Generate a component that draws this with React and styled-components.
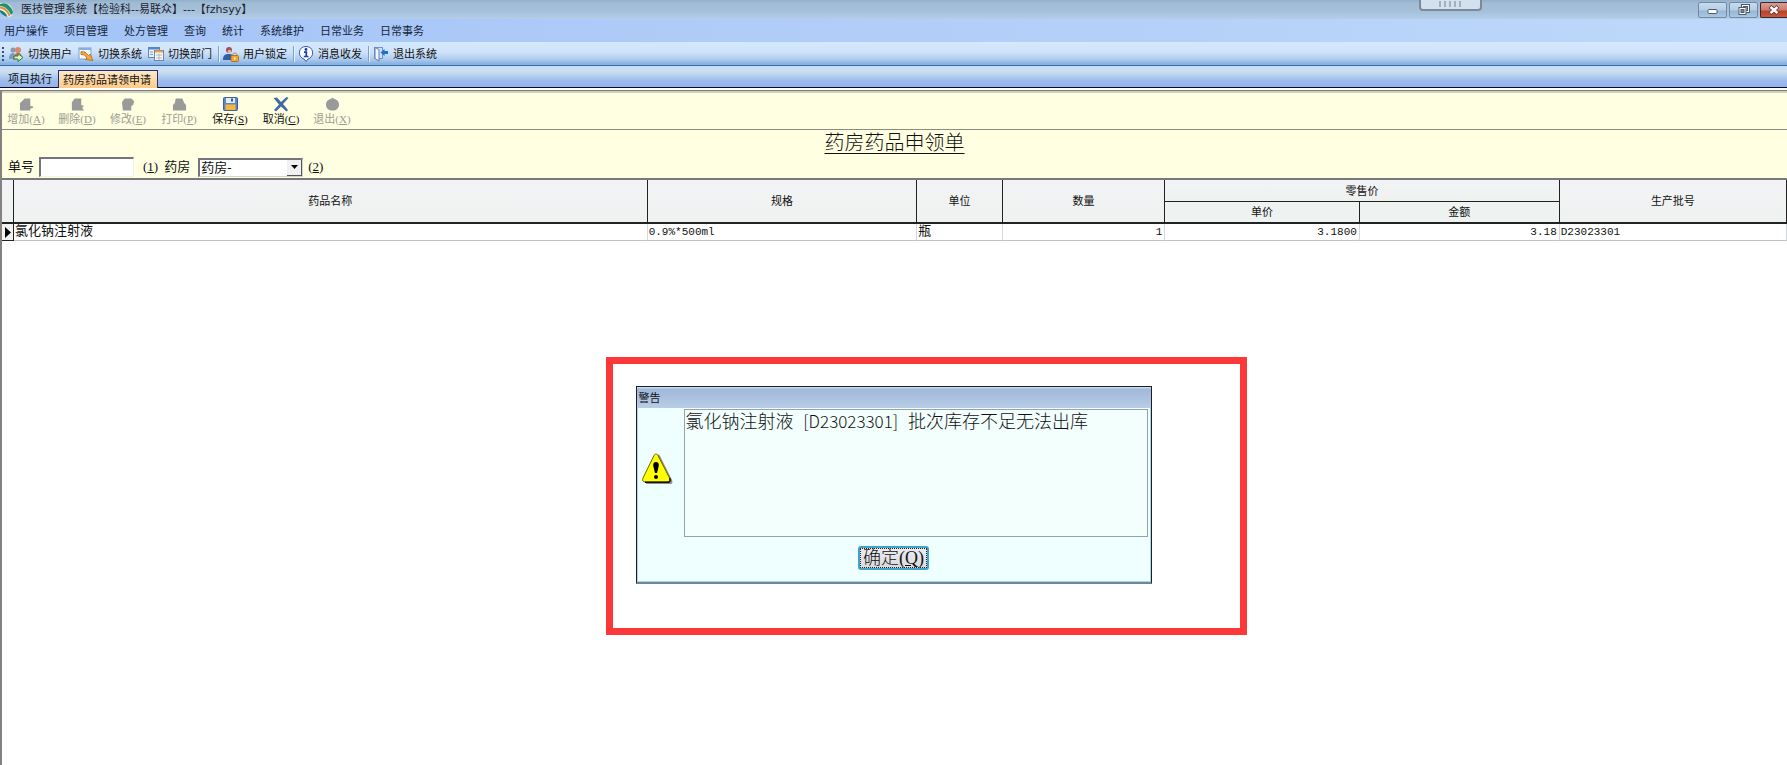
import React, { useState } from 'react'
import styled, { createGlobalStyle } from 'styled-components'

const GlobalStyle = createGlobalStyle`
    * {
        box-sizing: border-box;
    }
    body {
        margin: 0;
        background: #fff;
        color: #111;
        font-family: "Liberation Serif", "Noto Sans CJK SC", serif;
        font-size: 11px;
        line-height: 16px;
        overflow: hidden;
    }
    button, input, select {
        font: inherit;
        color: inherit;
        margin: 0;
        padding: 0;
    }
`

const Page = styled.div`
    min-height: 100vh;
    display: flex;
    flex-direction: column;
`

const TitleBar = styled.header`
    position: relative;
    height: 19px;
    display: flex;
    align-items: center;
    gap: 7px;
    background: linear-gradient(#8fb0cc 0, #a3bcd6 3px, #a6c0da 11px, #b4cdea 100%);
    overflow: hidden;
`

const TitleText = styled.h1`
    flex: 1;
    margin: 0;
    font: 400 11px/16px "DejaVu Sans", "Noto Sans CJK SC", sans-serif;
    color: #1a2430;
`

const WindowButtons = styled.div`
    display: flex;
    gap: 2px;
`

const WindowButton = styled.button`
    width: ${props => props.$close ? 27 : 29}px;
    height: 16px;
    display: flex;
    align-items: center;
    justify-content: center;
    border: 1px solid ${props => props.$close ? '#3c2530' : '#6d8aa6'};
    border-right-width: ${props => props.$close ? 0 : 1}px;
    border-radius: ${props => props.$close ? '2px 0 0 2px' : '2px'};
    background: ${props => props.$close
        ? 'linear-gradient(#d9a095 0, #cb7a69 7px, #b9422a 8px, #c8583c 100%)'
        : 'linear-gradient(#c9dcee 0, #b5cde4 7px, #98b6d2 8px, #a9c8e2 100%)'};
`

const PullTab = styled.div`
    position: absolute;
    top: -4px;
    left: 79.4%;
    width: 63px;
    height: 15px;
    display: flex;
    justify-content: center;
    align-items: center;
    gap: 3px;
    border: 2px solid #7c8a98;
    border-radius: 4px;
    background: #d3e0ee;
    span {
        width: 2px;
        height: 6px;
        background: #a3afbd;
    }
`

const MenuBar = styled.nav`
    height: 23px;
    padding-left: 4px;
    display: flex;
    align-items: center;
    gap: 16px;
    background: linear-gradient(90deg, #a4c4f7, #b2cdf8 50%, #bed9fa);
`

const MenuItem = styled.a`
    color: #15263c;
    text-decoration: none;
`

const ToolBar = styled.div`
    height: 24px;
    padding-left: 2px;
    display: flex;
    align-items: center;
    background: linear-gradient(#d3e9fd 0, #cfe2fa 10px, #b0cdee 17px, #86b1e2 22px);
    border-bottom: 1px solid #3f6aa8;
`

const Grip = styled.span`
    width: 2px;
    height: 14px;
    margin-right: 4px;
    background: repeating-linear-gradient(#2f4f86 0 2px, transparent 2px 4px);
`

const ToolButton = styled.button`
    display: flex;
    align-items: center;
    gap: 4px;
    margin-right: 6px;
    border: 0;
    background: none;
    white-space: nowrap;
`

const Divider = styled.span`
    width: 1px;
    height: 16px;
    margin-right: 4px;
    background: #7f9fcb;
    box-shadow: 1px 0 #e6f1fd;
`

const TabStrip = styled.div`
    height: 22px;
    padding-left: 8px;
    display: flex;
    align-items: flex-end;
    gap: 6px;
    background: linear-gradient(#c3def9 0, #d0e0f2 5px, #b9d3f1 9px, #9bbbec 15px, #93b2ea 100%);
    box-shadow: inset 0 -1px #0c0c28;
`

const Tab = styled.button`
    height: 18px;
    padding: ${props => props.$active ? '0 6px 0 4px' : '0'};
    border: ${props => props.$active ? '1px solid #1c2c78' : '0'};
    border-bottom: 0;
    background: ${props => props.$active ? 'linear-gradient(#fde8c8, #ffcb86)' : 'none'};
`

const Sheet = styled.main`
    flex: 1;
    display: flex;
    flex-direction: column;
    margin-top: 2px;
    border-top: 1px solid #8f7468;
    border-left: 2px solid #85817f;
    background: #fff;
`

const ActionBar = styled.div`
    height: 39px;
    padding: 4px 0 0 5px;
    display: flex;
    align-items: flex-start;
    gap: 13px;
    background: #ffffe1;
    border-top: 2px solid #c9d3c4;
    border-bottom: 1px solid #8b8b80;
`

const ActionButton = styled.button`
    width: 38px;
    display: flex;
    flex-direction: column;
    align-items: center;
    border: 0;
    background: none;
    white-space: nowrap;
    line-height: 14px;
    color: ${props => props.disabled ? '#9d9d92' : '#111'};
`

const FormHead = styled.section`
    padding: 1px 6px;
    background: #ffffe1;
`

const FormTitle = styled.h2`
    margin: 0 0 2px;
    font-size: 20px;
    font-weight: 300;
    line-height: 24px;
    text-align: center;
    text-decoration: underline;
    text-decoration-thickness: 1px;
    text-underline-offset: 3px;
`

const FormRow = styled.div`
    height: 20px;
    display: flex;
    align-items: center;
    gap: 6px;
    font-size: 13px;
`

const NumberInput = styled.input`
    width: 95px;
    height: 20px;
    margin-right: 4px;
    border: 1px solid #f4f4e4;
    border-top: 2px solid #74747c;
    border-left: 2px solid #74747c;
    border-radius: 0;
    background: #fff;
    outline: none;
`

const Field = styled.label`
    display: flex;
    align-items: center;
    gap: 5px;
`

const SelectBox = styled.span`
    position: relative;
    display: flex;
    margin-left: 3px;
`

const Select = styled.select`
    width: 105px;
    height: 19px;
    padding-left: 1px;
    appearance: none;
    border: 1px solid #d4d4cc;
    border-top: 2px solid #74747c;
    border-left: 2px solid #74747c;
    border-radius: 0;
    background: #fff;
    outline: none;
`

const SelectArrow = styled.span`
    position: absolute;
    top: 2px;
    right: 1px;
    width: 15px;
    height: 16px;
    display: flex;
    align-items: center;
    justify-content: center;
    background: #f1f1f1;
    border-right: 1px solid #55555c;
    border-bottom: 1px solid #55555c;
    pointer-events: none;
`

const Grid = styled.table`
    width: 100%;
    table-layout: fixed;
    border-collapse: separate;
    border-spacing: 0;
    border-top: 2px solid #77797c;
    th, td {
        padding: 0;
        white-space: nowrap;
    }
    thead tr {
        height: 22px;
    }
    tbody tr {
        height: 17px;
    }
`

const HeadCell = styled.th`
    font-weight: 400;
    line-height: 18px;
    border-right: 1px solid #222;
    border-bottom: ${props => props.$group ? 1 : 2}px solid #222;
    background: ${props => props.$low ? '#eef2f0' : 'linear-gradient(#f3f3f6, #eef2ef)'};
`

const Cell = styled.td`
    border-right: 1px solid #d3d8de;
    border-bottom: 1px solid #bfc3c6;
    font-family: "Liberation Mono", "Noto Sans CJK SC", monospace;
    font-size: ${props => props.$text ? 13 : 11}px;
    line-height: 16px;
    text-align: ${props => props.$right ? 'right' : 'left'};
    && {
        padding: 0 2px 0 1px;
    }
`

const MarkerCell = styled.td`
    border-right: 1px solid #222;
    border-bottom: 1px solid #222;
    background: #f2f2f2;
    svg {
        display: block;
        margin-left: 3px;
    }
`

/* floats over the sheet */
const Highlight = styled.div`
    position: absolute;
    top: 357px;
    left: calc(50% - 288px);
    width: 641px;
    height: 278px;
    padding: 22px 23px;
    border: 7px solid #fd3838;
    background: #fff;
`

const Dialog = styled.div`
    width: 516px;
    height: 198px;
    display: flex;
    flex-direction: column;
    border: 1px solid #1a1f26;
    border-bottom: 2px solid #6d8796;
    background: #effefe;
    box-shadow: inset -1px -1px #a9d4ea, inset 1px 0 #a9d4ea;
`

const DialogTitle = styled.div`
    height: 21px;
    padding: 3px 0 0 2px;
    background: linear-gradient(#d9e9f6 0, #a1b9da 2px, #a8bfde 9px, #b9cde6 100%);
`

const DialogBody = styled.div`
    flex: 1;
    display: grid;
    grid-template-columns: 36px 1fr;
    column-gap: 11px;
    padding: 1px 3px 0 0;
`

const DialogIcon = styled.div`
    padding: 44px 0 0 5px;
`

const Message = styled.div`
    height: 128px;
    padding: 0 1px;
    border: 1px solid #98a3a6;
    background: #f2fffd;
    font-size: 18px;
    font-weight: 300;
    line-height: 22px;
    white-space: pre;
`

const Code = styled.span`
    margin: 0 6px;
    font-family: "Noto Sans CJK SC", sans-serif;
    font-size: 17px;
`

const DialogFoot = styled.div`
    height: 46px;
    display: flex;
    justify-content: center;
    align-items: flex-start;
    padding-top: 9px;
`

const OkButton = styled.button`
    width: 71px;
    height: 24px;
    border: 2px solid #3fa4c8;
    border-radius: 3px;
    background: linear-gradient(#ececf0, #d9d9de);
    outline: 1px dotted #222;
    outline-offset: -3px;
    font-size: 18px;
    font-weight: 300;
    line-height: 18px;
    white-space: nowrap;
`

const LogoIcon = () => (
    <svg width="14" height="16" viewBox="0 0 14 16">
        <path d="M0 1 H5 C10 2 13 6 13 10 C13 13 11 15 8 15 C5 14 2 12 0 9Z" fill="#eef2e8" />
        <path d="M0 2 C3 1 5 1 7 2 C11 5 13 8 13 11 L11 13 C9 8 5 4 0 4Z" fill="#23906f" />
        <path d="M0 4.500 C5 5 8 8 10.500 13 L9 14.500 C7 10 4 7 0 6.500Z" fill="#e58f35" />
        <path d="M0 8 C4 9 6 11 7.500 15 C4 14 2 12 0 10Z" fill="#177f86" />
    </svg>
)

const UsersIcon = () => (
    <svg width="16" height="16" viewBox="0 0 16 16">
        <circle cx="5" cy="4" r="2.5" fill="#8b9aa8" />
        <path d="M1 13 C1 8 3 7 6 7 L8 13Z" fill="#6f9fc8" />
        <circle cx="10" cy="4" r="3" fill="#d98a6c" />
        <path d="M5 14 C5 9 7 7 10 7 C13 7 14 9 14 12Z" fill="#d8695e" />
        <path d="M6 10 H10 V7.500 L15 11.500 L10 15.500 V13 H6Z" fill="#d9f3cc" stroke="#2f7d3a" />
    </svg>
)

const SystemIcon = () => (
    <svg width="16" height="16" viewBox="0 0 16 16">
        <rect x="1" y="2" width="12" height="11" fill="#f6f9fd" stroke="#7da2d4" />
        <rect x="1" y="2" width="12" height="2" fill="#88aee0" />
        <path d="M3 5.500 L7 6 L10.500 9.500 L12 8 L15 14.500 L7.500 13.500 L9 12 L6.500 9 L3 8.500Z" fill="#f4a936" stroke="#b5671a" strokeWidth=".8" />
    </svg>
)

const DeptIcon = () => (
    <svg width="16" height="16" viewBox="0 0 16 16">
        <rect x="0.500" y="1.500" width="11" height="10" fill="#e9f1fc" stroke="#5f83c4" />
        <path d="M1 2.500 H11" stroke="#5f83c4" strokeWidth="2" />
        <path d="M2 6 H5 M2 8.500 H5" stroke="#7d9ace" />
        <rect x="6.500" y="4.500" width="9" height="10" fill="#fdf6e4" stroke="#6a84b8" />
        <path d="M7 5.500 H15" stroke="#f0a63a" strokeWidth="2" />
        <path d="M8 9 H14 M8 12 H14 M11 7.500 V14" stroke="#a9b8d4" />
    </svg>
)

const LockUserIcon = () => (
    <svg width="16" height="16" viewBox="0 0 16 16">
        <circle cx="6" cy="4" r="3" fill="#a54b5c" />
        <circle cx="6.500" cy="5.500" r="1.800" fill="#e7b48f" />
        <path d="M0 14 C0 9 2 8 6 8 C10 8 11 10 11 14Z" fill="#2f5ea8" />
        <path d="M9.800 10 V8.500 A2 2 0 0 1 13.700 8.500 V10" fill="none" stroke="#a88a4c" />
        <rect x="8" y="9.500" width="7.500" height="6" rx="1" fill="#f3a733" stroke="#a8661c" strokeWidth=".8" />
        <path d="M11.700 11.500 V13.500" stroke="#fff3d0" strokeWidth="1.500" />
    </svg>
)

const InfoIcon = () => (
    <svg width="16" height="16" viewBox="0 0 16 16">
        <path d="M8 0.500 A6.700 6.400 0 0 1 10 13 L8 15.500 L6 13 A6.700 6.400 0 0 1 8 0.500Z" fill="#f7fbff" stroke="#3c5ca4" />
        <circle cx="8" cy="3.500" r="1.400" fill="#1c3fa8" />
        <path d="M6 6.200 H8.300 V10.500 M5.800 10.500 H10.500" fill="none" stroke="#1c3fa8" strokeWidth="1.700" />
    </svg>
)

const ExitIcon = () => (
    <svg width="16" height="16" viewBox="0 0 16 16">
        <rect x="1.500" y="1.500" width="8" height="11" fill="#cfe0f4" stroke="#7394c6" />
        <path d="M2 1.500 L6 3.500 V15 L2 12.500Z" fill="#f4f8fd" stroke="#5d7fb6" />
        <path d="M15 5 H11.500 V3 L7.500 6.500 L11.500 10 V8 H15Z" fill="#1f6fd0" />
    </svg>
)

const grayShapes = {
    add: 'M2 5 L6 1 H12 V9 L15 9.500 V11 L12 12 V14 H1 V6Z',
    remove: 'M2 5 L5 1 H12 V8 L15 9 L13 11 L15 14 H2Z',
    edit: 'M1 5 L4 1 H11 L14 4 L13 8 L11 9 V14 H2Z',
    print: 'M4 1 H11 L13 6 L15 8 V14 H1 V8 L3 6Z',
    exit: 'M8 0 L9 1 C13 2 15 4 15 7.500 C15 11.500 12 14 8 14 C4 14 1 11.500 1 7.500 C1 4 3 2 7 1Z',
}

const GrayIcon = ({ name }) => (
    <svg width="15" height="15" viewBox="0 0 16 15">
        <path d={grayShapes[name]} fill="#9a9a9a" />
    </svg>
)

const SaveIcon = () => (
    <svg width="15" height="15" viewBox="0 0 15 15">
        <rect x="0.500" y="0.500" width="14" height="13" rx="1" fill="#5f86c4" stroke="#3c5f9e" />
        <rect x="3" y="1" width="9" height="5" fill="#e4ecf6" />
        <rect x="8" y="1.500" width="2" height="3" fill="#35579c" />
        <rect x="2.500" y="7.500" width="10" height="5.500" fill="#f6b83c" />
    </svg>
)

const CancelIcon = () => (
    <svg width="16" height="15" viewBox="0 0 16 15">
        <path d="M0.500 1 L4 0.500 L8 5 L13.500 0 L15.500 1 L10 7 L15 13 L13.500 14.500 L8 9.500 L3 14.500 L1 13 L6 7.500Z" fill="#4468a6" />
    </svg>
)

const WarningIcon = () => (
    <svg width="31" height="32" viewBox="0 0 31 32">
        <path d="M14 3 C15 1 17 1 18 3 L30 27 C31 30 30 31 28 31 H4Z" fill="#8c8c8c" />
        <path d="M12 2.500 C13 0.500 15 0.500 16 2.500 L27.500 25 C28.500 27.500 28 29 26 29 H3 C1 29 0 27.500 1 25Z" fill="#ffff00" stroke="#6b6b00" />
        <path d="M3 29.300 H26 C28 29 28.700 27.500 27.700 25" fill="none" stroke="#111" strokeWidth="1.500" />
        <path d="M14 9 C17 9 17 12 16.500 14 L15 20 H13 L11.500 14 C11 12 11 9 14 9Z" fill="#000" />
        <circle cx="14" cy="24" r="2" fill="#000" />
    </svg>
)

const menus = ['用户操作', '项目管理', '处方管理', '查询', '统计', '系统维护', '日常业务', '日常事务']

const tools = [
    { label: '切换用户', icon: <UsersIcon /> },
    { label: '切换系统', icon: <SystemIcon /> },
    { label: '切换部门', icon: <DeptIcon /> },
    { label: '用户锁定', icon: <LockUserIcon />, divided: true },
    { label: '消息收发', icon: <InfoIcon />, divided: true },
    { label: '退出系统', icon: <ExitIcon />, divided: true },
]

const actions = [
    { label: '增加', hotkey: 'A', icon: <GrayIcon name="add" />, disabled: true },
    { label: '删除', hotkey: 'D', icon: <GrayIcon name="remove" />, disabled: true },
    { label: '修改', hotkey: 'E', icon: <GrayIcon name="edit" />, disabled: true },
    { label: '打印', hotkey: 'P', icon: <GrayIcon name="print" />, disabled: true },
    { label: '保存', hotkey: 'S', icon: <SaveIcon /> },
    { label: '取消', hotkey: 'C', icon: <CancelIcon /> },
    { label: '退出', hotkey: 'X', icon: <GrayIcon name="exit" />, disabled: true },
]

const rows = [
    { name: '氯化钠注射液', spec: '0.9%*500ml', unit: '瓶', qty: '1', price: '3.1800', amount: '3.18', batch: 'D23023301' },
]

const App = () => {
    const [tab, setTab] = useState(1);
    const [open, setOpen] = useState(true);
    const [number, setNumber] = useState('');

  return (
    <Page>
        <GlobalStyle />
        <TitleBar>
            <LogoIcon />
            <TitleText>医技管理系统【检验科--易联众】---【fzhsyy】</TitleText>
            <PullTab><span /><span /><span /><span /><span /></PullTab>
            <WindowButtons>
                <WindowButton aria-label="最小化">
                    <svg width="12" height="8" viewBox="0 0 12 8"><rect x="1" y="3.500" width="9" height="4" rx="1" fill="#fff" stroke="#4c5a6c" /></svg>
                </WindowButton>
                <WindowButton aria-label="还原">
                    <svg width="12" height="12" viewBox="0 0 12 12">
                        <rect x="4.500" y="1.500" width="6" height="6" fill="none" stroke="#4c5a6c" strokeWidth="3" />
                        <rect x="4.500" y="1.500" width="6" height="6" fill="none" stroke="#fff" />
                        <rect x="2" y="4.500" width="5" height="5" fill="#6d8aa6" stroke="#4c5a6c" strokeWidth="3" />
                        <rect x="2" y="4.500" width="5" height="5" fill="none" stroke="#fff" />
                    </svg>
                </WindowButton>
                <WindowButton $close aria-label="关闭">
                    <svg width="12" height="10" viewBox="0 0 12 10">
                        <path d="M2 1.500 L10 8.500 M10 1.500 L2 8.500" stroke="#5a3038" strokeWidth="4" />
                        <path d="M2.500 2 L9.500 8 M9.500 2 L2.500 8" stroke="#fff" strokeWidth="2.400" />
                    </svg>
                </WindowButton>
            </WindowButtons>
        </TitleBar>
        <MenuBar>
            {menus.map(menu => <MenuItem key={menu} href="#">{menu}</MenuItem>)}
        </MenuBar>
        <ToolBar>
            <Grip />
            {tools.map(tool => (
                <React.Fragment key={tool.label}>
                    {tool.divided && <Divider />}
                    <ToolButton>{tool.icon}{tool.label}</ToolButton>
                </React.Fragment>
            ))}
        </ToolBar>
        <TabStrip>
            <Tab $active={tab === 0} onClick={() => setTab(0)}>项目执行</Tab>
            <Tab $active={tab === 1} onClick={() => setTab(1)}>药房药品请领申请</Tab>
        </TabStrip>
        <Sheet>
            <ActionBar>
                {actions.map(action => (
                    <ActionButton key={action.hotkey} disabled={action.disabled}>
                        {action.icon}
                        <span>{action.label}(<u>{action.hotkey}</u>)</span>
                    </ActionButton>
                ))}
            </ActionBar>
            <FormHead>
                <FormTitle>药房药品申领单</FormTitle>
                <FormRow>
                    <Field>单号
                        <NumberInput value={number} onChange={e => setNumber(e.target.value)} />
                        <span>(<u>1</u>)</span>
                    </Field>
                    <Field>药房
                        <SelectBox>
                            <Select>
                                <option>药房-</option>
                            </Select>
                            <SelectArrow>
                                <svg width="7" height="4" viewBox="0 0 7 4"><path d="M0 0 H7 L3.500 4Z" fill="#000" /></svg>
                            </SelectArrow>
                        </SelectBox>
                        <span>(<u>2</u>)</span>
                    </Field>
                </FormRow>
            </FormHead>
            <Grid>
                <colgroup>
                    <col style={{ width: 12 }} />
                    <col style={{ width: '35.5%' }} />
                    <col style={{ width: '15.1%' }} />
                    <col style={{ width: '4.8%' }} />
                    <col style={{ width: '9.1%' }} />
                    <col style={{ width: '10.9%' }} />
                    <col style={{ width: '11.2%' }} />
                    <col />
                </colgroup>
                <thead>
                    <tr>
                        <HeadCell rowSpan="2" />
                        <HeadCell rowSpan="2">药品名称</HeadCell>
                        <HeadCell rowSpan="2">规格</HeadCell>
                        <HeadCell rowSpan="2">单位</HeadCell>
                        <HeadCell rowSpan="2">数量</HeadCell>
                        <HeadCell colSpan="2" $group>零售价</HeadCell>
                        <HeadCell rowSpan="2">生产批号</HeadCell>
                    </tr>
                    <tr>
                        <HeadCell $low>单价</HeadCell>
                        <HeadCell $low>金额</HeadCell>
                    </tr>
                </thead>
                <tbody>
                    {rows.map(row => (
                        <tr key={row.batch}>
                            <MarkerCell>
                                <svg width="6" height="11" viewBox="0 0 6 11"><path d="M0 0 L6 5.500 L0 11Z" fill="#000" /></svg>
                            </MarkerCell>
                            <Cell $text>{row.name}</Cell>
                            <Cell>{row.spec}</Cell>
                            <Cell $text>{row.unit}</Cell>
                            <Cell $right>{row.qty}</Cell>
                            <Cell $right>{row.price}</Cell>
                            <Cell $right>{row.amount}</Cell>
                            <Cell>{row.batch}</Cell>
                        </tr>
                    ))}
                </tbody>
            </Grid>
        </Sheet>
        {open && (
            <Highlight>
                <Dialog role="alertdialog" aria-label="警告">
                    <DialogTitle>警告</DialogTitle>
                    <DialogBody>
                        <DialogIcon><WarningIcon /></DialogIcon>
                        <Message>氯化钠注射液<Code> [D23023301] </Code>批次库存不足无法出库</Message>
                    </DialogBody>
                    <DialogFoot>
                        <OkButton onClick={() => setOpen(false)}>确定(<u>Q</u>)</OkButton>
                    </DialogFoot>
                </Dialog>
            </Highlight>
        )}
    </Page>
  )
}

export default App
